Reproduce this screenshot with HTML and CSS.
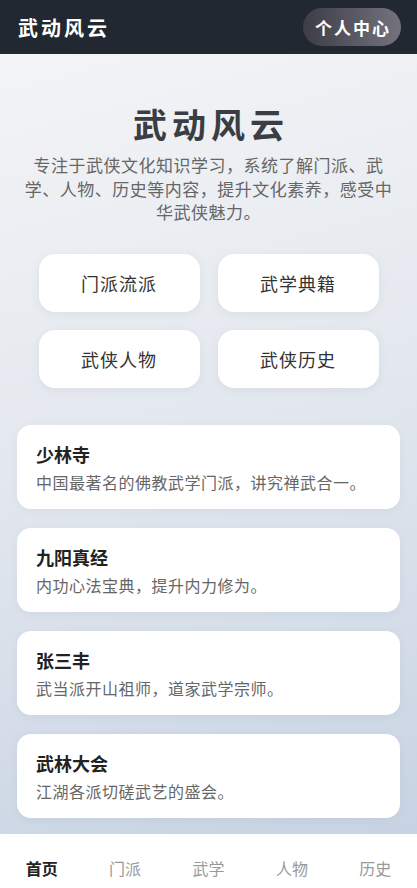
FILE: index.html
```html
<!DOCTYPE html>
<html>
<head>
    <meta charset="UTF-8">
    <title>武动风云</title>
    <meta name="viewport" content="width=device-width, initial-scale=1.0">
    <link rel="stylesheet" href="styles.css">
</head>
<body>
    <div class="page">
        <div class="topbar">
            <div class="brand">武动风云</div>
            <a class="user-btn" href="#">个人中心</a>
        </div>

        <div class="main">
            <div class="hero">
                <h1>武动风云</h1>
                <p>专注于武侠文化知识学习，系统了解门派、武学、人物、历史等内容，提升文化素养，感受中华武侠魅力。</p>
            </div>

            <div class="quick">
                <a class="quick-btn" href="#">门派流派</a>
                <a class="quick-btn" href="#">武学典籍</a>
                <a class="quick-btn" href="#">武侠人物</a>
                <a class="quick-btn" href="#">武侠历史</a>
            </div>

            <div class="list">
                <div class="card">
                    <div class="card-title">少林寺</div>
                    <div class="card-desc">中国最著名的佛教武学门派，讲究禅武合一。</div>
                </div>
                <div class="card">
                    <div class="card-title">九阳真经</div>
                    <div class="card-desc">内功心法宝典，提升内力修为。</div>
                </div>
                <div class="card">
                    <div class="card-title">张三丰</div>
                    <div class="card-desc">武当派开山祖师，道家武学宗师。</div>
                </div>
                <div class="card">
                    <div class="card-title">武林大会</div>
                    <div class="card-desc">江湖各派切磋武艺的盛会。</div>
                </div>
            </div>
        </div>

        <div class="tabbar">
            <a class="tab active" href="#">首页</a>
            <a class="tab" href="#">门派</a>
            <a class="tab" href="#">武学</a>
            <a class="tab" href="#">人物</a>
            <a class="tab" href="#">历史</a>
        </div>
    </div>
</body>
</html>
```

FILE: styles.css
```css
* {
    box-sizing: border-box;
}
body {
    margin: 0;
    font-family: "Noto Sans CJK SC", "Noto Sans", sans-serif;
    color: #333;
}
a {
    text-decoration: none;
}
.page {
    height: 100vh;
    display: flex;
    flex-direction: column;
}
.topbar {
    height: 54px;
    flex-shrink: 0;
    background-color: #222831;
    display: flex;
    align-items: center;
    justify-content: space-between;
    padding: 0 16px 0 18px;
}
.brand {
    color: #fff;
    font-size: 20px;
    font-weight: bold;
    letter-spacing: 3px;
}
.user-btn {
    height: 38px;
    width: 98px;
    border-radius: 19px;
    background: linear-gradient(90deg, #3c3d46, #75727d);
    color: #fff;
    font-size: 17px;
    font-weight: bold;
    letter-spacing: 2px;
    display: flex;
    align-items: center;
    justify-content: center;
    padding-left: 2px;
}
.main {
    flex: 1;
    overflow: hidden;
    background: linear-gradient(165deg, #f3f4f6 0%, #e2e7ee 50%, #c7d3e3 100%);
}
.hero {
    text-align: center;
    padding: 49px 20px 0;
}
.hero h1 {
    margin: 0;
    font-size: 34px;
    line-height: 42px;
    letter-spacing: 5px;
    padding-left: 5px;
    color: #3a3d42;
}
.hero p {
    margin: 8px 0 0;
    font-size: 17px;
    line-height: 23.5px;
    letter-spacing: 0.5px;
    color: #666;
}
.quick {
    display: grid;
    grid-template-columns: 161px 161px;
    gap: 18px;
    justify-content: center;
    margin-top: 30px;
}
.quick-btn {
    height: 58px;
    background-color: #fff;
    border-radius: 16px;
    box-shadow: 0 2px 8px rgba(60, 80, 110, 0.08);
    color: #333;
    font-size: 18px;
    letter-spacing: 1px;
    display: flex;
    align-items: center;
    justify-content: center;
}
.list {
    display: flex;
    flex-direction: column;
    gap: 19px;
    padding: 37px 17px 17px;
}
.card {
    background-color: #fff;
    border-radius: 14px;
    padding: 16px 19px;
    box-shadow: 0 2px 8px rgba(60, 80, 110, 0.06);
}
.card-title {
    font-size: 18px;
    line-height: 26px;
    font-weight: bold;
    color: #222;
}
.card-desc {
    margin-top: 4px;
    font-size: 16px;
    line-height: 22px;
    color: #666;
    letter-spacing: 0.5px;
}
.tabbar {
    height: 54px;
    flex-shrink: 0;
    background-color: #fff;
    display: flex;
    padding-top: 23px;
}
.tab {
    flex: 1;
    text-align: center;
    font-size: 16px;
    line-height: 22px;
    color: #999;
}
.tab.active {
    color: #222;
    font-weight: bold;
}
```
